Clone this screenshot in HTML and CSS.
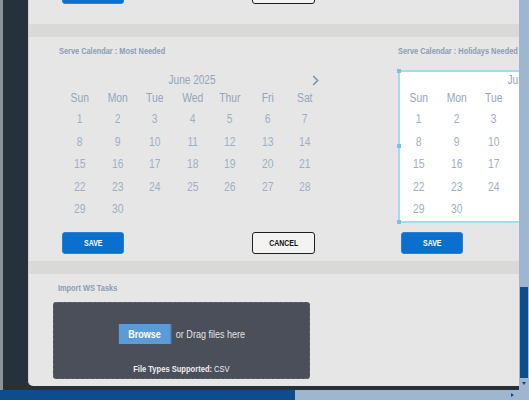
FILE: index.html
```html
<!DOCTYPE html>
<html lang="en">
<head>
<meta charset="utf-8">
<title>Serve Calendar</title>
<link rel="stylesheet" href="styles.css">
</head>
<body>
<div class="app">
  <aside class="sidebar"></aside>
  <main class="main">
    <div class="panel">
      <div class="actions actions-top">
        <button class="btn btn-primary"><span class="nw">SAVE</span></button>
        <button class="btn btn-outline"><span class="nw">CANCEL</span></button>
      </div>
      <div class="band"></div>
      <section class="cal-section">
        <div class="cal-col">
          <h3 class="title">Serve Calendar : Most Needed</h3>
          <div class="cal">
            <div class="cal-month"><span></span><span class="month-name">June 2025</span><svg class="chev" width="7" height="11" viewBox="0 0 7 11"><path d="M1.2 1 L5.6 5.5 L1.2 10" fill="none" stroke="#7f8fa6" stroke-width="1.6"/></svg></div>
            <div class="cal-grid">
              <span class="dow">Sun</span><span class="dow">Mon</span><span class="dow">Tue</span><span class="dow">Wed</span><span class="dow">Thur</span><span class="dow">Fri</span><span class="dow">Sat</span>
              <span>1</span><span>2</span><span>3</span><span>4</span><span>5</span><span>6</span><span>7</span>
              <span>8</span><span>9</span><span>10</span><span>11</span><span>12</span><span>13</span><span>14</span>
              <span>15</span><span>16</span><span>17</span><span>18</span><span>19</span><span>20</span><span>21</span>
              <span>22</span><span>23</span><span>24</span><span>25</span><span>26</span><span>27</span><span>28</span>
              <span>29</span><span>30</span>
            </div>
          </div>
          <div class="actions">
            <button class="btn btn-primary"><span class="nw">SAVE</span></button>
            <button class="btn btn-outline"><span class="nw">CANCEL</span></button>
          </div>
        </div>
        <div class="cal-col">
          <h3 class="title">Serve Calendar : Holidays Needed</h3>
          <div class="cal cal-selected">
            <span class="handle handle-top"></span>
            <span class="handle handle-mid"></span>
            <span class="handle handle-bottom"></span>
            <div class="cal-month"><span></span><span class="month-name">June 2025</span><svg class="chev" width="7" height="11" viewBox="0 0 7 11"><path d="M1.2 1 L5.6 5.5 L1.2 10" fill="none" stroke="#7f8fa6" stroke-width="1.6"/></svg></div>
            <div class="cal-grid">
              <span class="dow">Sun</span><span class="dow">Mon</span><span class="dow">Tue</span><span class="dow">Wed</span><span class="dow">Thur</span><span class="dow">Fri</span><span class="dow">Sat</span>
              <span>1</span><span>2</span><span>3</span><span>4</span><span>5</span><span>6</span><span>7</span>
              <span>8</span><span>9</span><span>10</span><span>11</span><span>12</span><span>13</span><span>14</span>
              <span>15</span><span>16</span><span>17</span><span>18</span><span>19</span><span>20</span><span>21</span>
              <span>22</span><span>23</span><span>24</span><span>25</span><span>26</span><span>27</span><span>28</span>
              <span>29</span><span>30</span>
            </div>
          </div>
          <div class="actions">
            <button class="btn btn-primary"><span class="nw">SAVE</span></button>
          </div>
        </div>
      </section>
      <div class="band band-lower"></div>
      <section class="import">
        <h3 class="title">Import WS Tasks</h3>
        <div class="dropzone">
          <div class="drop-row">
            <button class="browse">Browse</button>
            <span class="drop-text">or Drag files here</span>
          </div>
          <p class="file-types"><b>File Types Supported:</b> CSV</p>
        </div>
      </section>
    </div>
  </main>
  <div class="vscroll">
    <div class="vthumb"></div>
    <span class="varrow"></span>
  </div>
  <div class="hscroll">
    <div class="hthumb"></div>
    <span class="harrow"></span>
  </div>
</div>
</body>
</html>
```

FILE: styles.css
```css
* { box-sizing: border-box; }

html, body {
  margin: 0;
  padding: 0;
  width: 529px;
  height: 400px;
  overflow: hidden;
  background: #263139;
  font-family: "Liberation Sans", Arial, sans-serif;
}

.app {
  display: grid;
  grid-template-columns: 28px 491px 10px;
  grid-template-rows: 390px 10px;
  width: 529px;
  height: 400px;
}

.sidebar {
  background: #263139;
  border-left: 3px solid #8c9399;
}

.main {
  background: #263139;
  overflow: hidden;
}

.panel {
  height: 386px;
  background: #e6e6e6;
  border-left: 1px solid #d2d2d2;
  border-bottom-left-radius: 5px;
  overflow: hidden;
  padding-left: 24px;
}

/* narrow (condensed) text look */
.nw {
  display: inline-block;
  transform: scaleX(0.82);
}

.actions {
  display: flex;
  gap: 128px;
  padding-left: 3px;
  margin-top: 9.5px;
}

.actions-top {
  margin-top: -18px;
  padding-left: 9px;
}

.btn {
  width: 62px;
  height: 22px;
  border-radius: 3px;
  font-family: "Liberation Sans", Arial, sans-serif;
  font-weight: 700;
  font-size: 8.5px;
  padding: 0;
  cursor: pointer;
}

.btn-primary {
  background: #0b6fce;
  border: 1px solid #2a80d2;
  color: #ffffff;
}

.btn-outline {
  width: 63px;
  background: #f3f3f3;
  border: 1.5px solid #1f1f1f;
  color: #111111;
}

.band {
  height: 13px;
  margin-top: 20px;
  margin-left: -24px;
  background: #d9d9d7;
}

.band-lower {
  margin-top: 7px;
}

.cal-section {
  display: flex;
  padding-left: 6px;
  padding-top: 8px;
}

.cal-col {
  flex: 0 0 339px;
}

.title {
  margin: 0;
  height: 12px;
  line-height: 12px;
  font-size: 9px;
  font-weight: 700;
  color: #8c9cb3;
  white-space: nowrap;
  transform: scaleX(0.82);
  transform-origin: left center;
}

.cal {
  position: relative;
  width: 266.5px;
  margin-top: 13px;
  border: 2px solid transparent;
}

.cal-selected {
  background: #ffffff;
  border-color: #a3dbef;
}

.handle {
  position: absolute;
  left: -3px;
  width: 4px;
  height: 4px;
  background: #7cc2df;
}

.handle-top { top: -3px; }
.handle-mid { top: 72px; }
.handle-bottom { bottom: -3px; }

.cal-month {
  display: grid;
  grid-template-columns: 1fr auto 1fr;
  align-items: center;
  height: 16px;
  font-size: 12px;
  color: #94a5bb;
}

.month-name {
  transform: scaleX(0.84);
}

.chev {
  justify-self: end;
  margin-right: 5px;
}

.cal-grid {
  display: grid;
  grid-template-columns: repeat(7, 37.5px);
  grid-template-rows: 20px;
  grid-auto-rows: 22.5px;
  font-size: 12px;
  color: #a0b0c4;
}

.cal-grid span {
  display: flex;
  align-items: center;
  justify-content: center;
  transform: scaleX(0.86);
}

.cal-grid .dow {
  color: #94a5bb;
}

.import {
  padding-top: 8px;
}

.import .title {
  padding-left: 6px;
}

.dropzone {
  width: 257px;
  height: 77px;
  margin-top: 8px;
  background: #4b4f59;
  border: 1px dashed #5f636b;
  border-radius: 3px;
  display: flex;
  flex-direction: column;
  align-items: center;
  padding-top: 21px;
}

.drop-row {
  display: flex;
  align-items: center;
  gap: 6px;
  transform: scaleX(0.82);
}

.browse {
  width: 63.5px;
  height: 20px;
  padding: 0;
  background: #5b9bd8;
  border: none;
  border-right: 1px solid #3d6fa3;
  color: #ffffff;
  font-family: "Liberation Sans", Arial, sans-serif;
  font-weight: 700;
  font-size: 11px;
}

.drop-text {
  font-size: 11px;
  color: #e4e4e4;
}

.file-types {
  margin: 20px 0 0;
  height: 10px;
  line-height: 10px;
  font-size: 9px;
  color: #eeeeee;
  white-space: nowrap;
  transform: scaleX(0.84);
}

.vscroll {
  position: relative;
  background: #9db7d1;
}

.vthumb {
  position: absolute;
  left: 1px;
  top: 287px;
  width: 8px;
  height: 91px;
  background: #0d4d8b;
}

.varrow {
  position: absolute;
  left: 3px;
  top: 382px;
  border-left: 2.5px solid transparent;
  border-right: 2.5px solid transparent;
  border-top: 3px solid #0d4d8b;
}

.hscroll {
  grid-column: 1 / -1;
  position: relative;
  background: #9db7d1;
}

.hthumb {
  width: 295px;
  height: 10px;
  background: #0d4d8b;
}

.harrow {
  position: absolute;
  left: 511px;
  top: 3px;
  border-top: 2.5px solid transparent;
  border-bottom: 2.5px solid transparent;
  border-left: 3px solid #0d4d8b;
}
```
